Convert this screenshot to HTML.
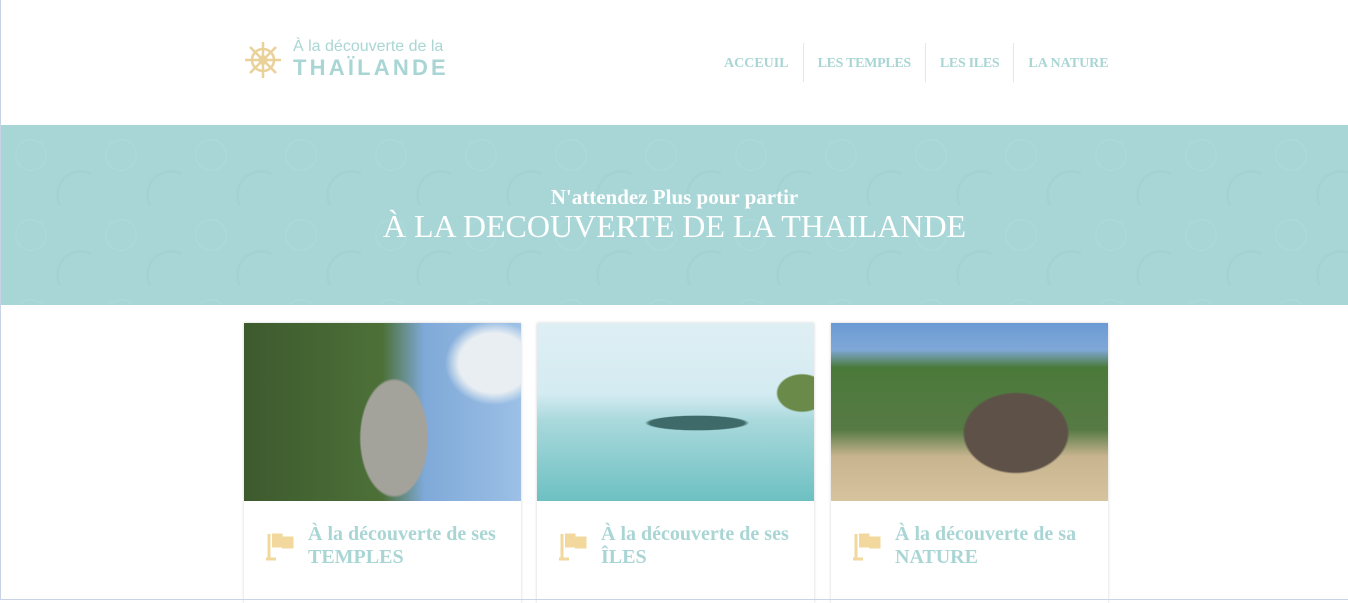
<!DOCTYPE html>
<html><head><meta charset="utf-8"><style>
*{margin:0;padding:0;box-sizing:border-box}
body{width:1348px;height:600px;overflow:hidden;background:#fff;font-family:"Liberation Serif",serif;position:relative}
.bl{position:absolute;left:0;top:0;width:1px;height:600px;background:#c9d3e6}
.bb{position:absolute;left:0;top:599px;width:1348px;height:1px;background:#c9d3e6;z-index:5}
.logo{position:absolute;left:244px;top:40px}
.t1{position:absolute;left:293px;top:38px;font-family:"Liberation Sans",sans-serif;font-size:16px;color:#a9d6d4;white-space:nowrap}
.t2{position:absolute;left:293px;top:57px;line-height:1;font-family:"Liberation Sans",sans-serif;font-size:22px;font-weight:bold;color:#a9d6d4;letter-spacing:3.2px;white-space:nowrap}
nav{position:absolute;top:43px;left:710px;display:flex;height:39px}
nav a{color:#a9d6d4;font-weight:bold;font-size:14px;text-decoration:none;padding:0 14px;line-height:42px;border-left:1px solid #d8ecec}
nav a:first-child{border-left:none}
nav a:nth-child(2),nav a:nth-child(3){letter-spacing:-.3px}
.banner{position:absolute;left:1px;top:125px;width:1347px;height:180px;background:#a8d6d7;
background-image:radial-gradient(circle at 30px 30px,transparent 14px,rgba(255,255,255,.06) 15px,transparent 17px),radial-gradient(circle at 80px 70px,transparent 22px,rgba(0,0,0,.03) 23px,transparent 26px);background-size:90px 80px;text-align:center;color:#fff}
.banner .s{position:absolute;top:60px;width:100%;font-size:21px;font-weight:bold}
.banner .b{position:absolute;top:83px;width:100%;font-size:32px}
.card{position:absolute;top:323px;width:277px;height:280px;background:#fff;box-shadow:0 0 3px rgba(0,0,0,.18)}
.img{height:178px}
.cap{position:absolute;left:64px;top:200px;color:#a9d6d4;font-weight:bold;font-size:20px;line-height:23px}
.flag{position:absolute;left:22px;top:209px}
</style></head><body>
<div class="bl"></div><div class="bb"></div>
<svg class="logo" width="38" height="40" viewBox="0 0 38 40" fill="none" stroke="#ead19a" stroke-width="2.5">
<circle cx="19" cy="20" r="11"/><circle cx="19" cy="20" r="3.5"/>
<path d="M19 2V38M1 20H37M6 7L32 33M32 7L6 33"/></svg>
<div class="t1">À la découverte de la</div>
<div class="t2">THAÏLANDE</div>
<nav><a>ACCEUIL</a><a>LES TEMPLES</a><a>LES ILES</a><a>LA NATURE</a></nav>
<div class="banner"><div class="s">N'attendez Plus pour partir</div><div class="b">À LA DECOUVERTE DE LA THAILANDE</div></div>

<div class="card" style="left:244px"><div class="img" style="background:radial-gradient(ellipse 55px 95px at 150px 115px,#a3a29b 60%,transparent 63%),radial-gradient(ellipse 70px 60px at 250px 40px,#e8eef2 50%,transparent 70%),linear-gradient(90deg,#3d5a2e 0,#4d7038 50%,#7fa9d8 65%,#9cc0e6 100%)"></div>
<svg class="flag" width="28" height="30"><path d="M3 2V26M0 27H10M6 3H15V14H6M16 6H26V15H16" stroke="#f2d89c" stroke-width="3" fill="#f2d89c"/></svg>
<div class="cap">À la découverte de ses<br>TEMPLES</div></div>

<div class="card" style="left:537px"><div class="img" style="background:radial-gradient(ellipse 95px 14px at 160px 100px,#3e6b6a 50%,transparent 55%),radial-gradient(ellipse 40px 30px at 265px 70px,#6a8a4a 60%,transparent 65%),linear-gradient(180deg,#dfeff4 0,#d3ebf1 40%,#a9d9dc 55%,#6dc0c2 100%)"></div>
<svg class="flag" width="28" height="30"><path d="M3 2V26M0 27H10M6 3H15V14H6M16 6H26V15H16" stroke="#f2d89c" stroke-width="3" fill="#f2d89c"/></svg>
<div class="cap">À la découverte de ses<br>ÎLES</div></div>

<div class="card" style="left:831px"><div class="img" style="background:radial-gradient(ellipse 85px 65px at 185px 110px,#5d5148 60%,transparent 63%),linear-gradient(180deg,#6b9ad3 0,#7fa8d8 15%,#4a7a3a 25%,#577a45 60%,#c8b590 75%,#d6c49e 100%)"></div>
<svg class="flag" width="28" height="30"><path d="M3 2V26M0 27H10M6 3H15V14H6M16 6H26V15H16" stroke="#f2d89c" stroke-width="3" fill="#f2d89c"/></svg>
<div class="cap">À la découverte de sa<br>NATURE</div></div>
</body></html>
